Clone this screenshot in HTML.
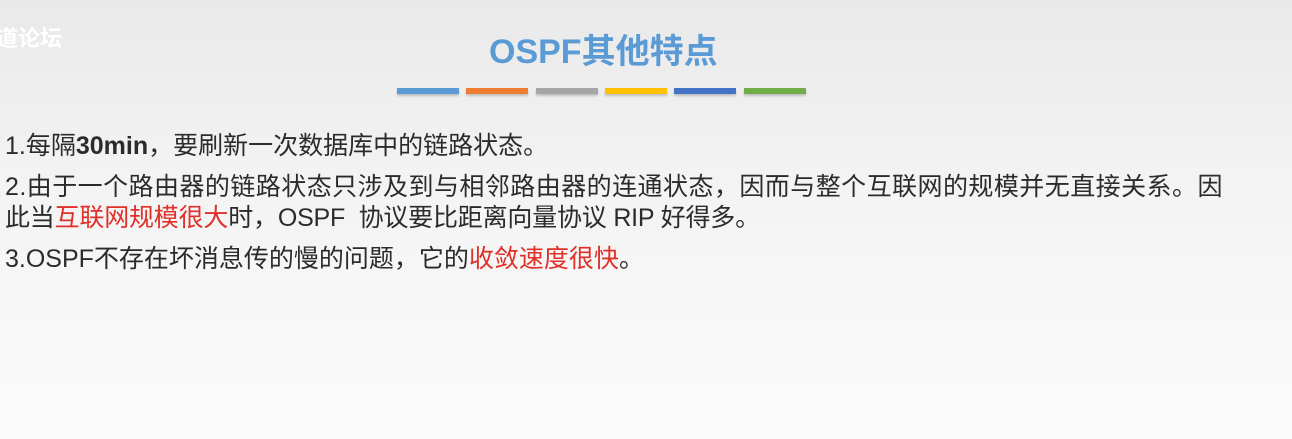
<!DOCTYPE html>
<html><head><meta charset="utf-8"><style>
html,body{margin:0;padding:0}
body{width:1292px;height:439px;overflow:hidden;position:relative;background:linear-gradient(180deg,#e9e9e9 0%,#f3f3f3 40%,#fbfbfb 100%);font-family:"Liberation Sans","Noto Sans CJK SC",sans-serif}
.t{position:absolute;white-space:nowrap;color:#2b2b2b;font-size:25px;line-height:30px}
.r{color:#e0302a}
.bar{position:absolute;top:88px;height:6px;width:62px;box-shadow:0 2px 2px rgba(0,0,0,.2)}
</style></head><body>
<div class="t" style="left:-4px;top:24px;color:#fff;font-size:22px;font-weight:bold">道论坛</div>
<div class="t" style="left:489px;top:34px;color:#5b9bd5;font-size:34px;line-height:36px;font-weight:bold">OSPF其他特点</div>
<div class="bar" style="left:397px;background:#5b9bd5"></div>
<div class="bar" style="left:466px;background:#ed7d31"></div>
<div class="bar" style="left:536px;background:#a5a5a5"></div>
<div class="bar" style="left:605px;background:#ffc000"></div>
<div class="bar" style="left:674px;background:#4472c4"></div>
<div class="bar" style="left:744px;background:#70ad47"></div>
<div class="t" style="left:5px;top:131px">1.每隔<b>30min</b>，要刷新一次数据库中的链路状态。</div>
<div class="t" style="left:5px;top:172px;letter-spacing:0.45px">2.由于一个路由器的链路状态只涉及到与相邻路由器的连通状态，因而与整个互联网的规模并无直接关系。因</div>
<div class="t" style="left:5px;top:203px;letter-spacing:-0.2px">此当<span class="r">互联网规模很大</span>时，OSPF&nbsp; 协议要比距离向量协议 RIP 好得多。</div>
<div class="t" style="left:5px;top:244px">3.OSPF不存在坏消息传的慢的问题，它的<span class="r">收敛速度很快</span>。</div>
</body></html>
